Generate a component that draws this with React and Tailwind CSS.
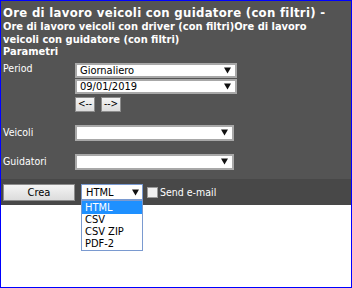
import React from "react";

const Arrow = () => (
  <svg width="7" height="7" viewBox="0 0 7 7" className="shrink-0">
    <path d="M0 0.5 H7 L3.5 6.5 Z" fill="#111" />
  </svg>
);

const Select = ({ value, w, className = "" }) => (
  <div
    className={`h-[15px] bg-white border-2 border-[#a8a8a8] flex items-center justify-between pl-[3px] pr-[4px] text-[11px] leading-none text-black ${w} ${className}`}
  >
    <span>{value}</span>
    <Arrow />
  </div>
);

const Btn = ({ children, className = "" }) => (
  <div
    className={`h-[15px] bg-gradient-to-b from-[#f4f4f4] to-[#dcdcdc] border border-[#8c8c8c] flex items-center justify-center text-[10px] leading-none text-black ${className}`}
  >
    {children}
  </div>
);

export default function App() {
  return (
    <div
      className="w-[352px] h-[288px] border border-[#0000ff] bg-white flex flex-col relative"
      style={{ fontFamily: '"DejaVu Sans Condensed", "DejaVu Sans", sans-serif' }}
    >
      <div className="bg-[#545454] text-white pl-[2px] pt-[4px] h-[178px]">
        <div className="text-[13px] font-bold leading-[15px] tracking-[0.3px]">
          Ore di lavoro veicoli con guidatore (con filtri) -
        </div>
        <div className="text-[11px] font-bold leading-[12.5px] mt-[1px]">
          Ore di lavoro veicoli con driver (con filtri)Ore di lavoro
          <br />
          veicoli con guidatore (con filtri)
        </div>
        <div className="text-[11px] font-bold leading-[12.5px]">Parametri</div>
        <div className="flex mt-[3px]">
          <div className="w-[72px] text-[10.5px] leading-[13px]">Period</div>
          <div className="flex flex-col gap-[1px] mt-[1px]">
            <Select value="Giornaliero" w="w-[162px]" />
            <Select value="09/01/2019" w="w-[162px]" />
            <div className="flex gap-[6px] mt-[2px]">
              <Btn className="w-[20px]">&lt;--</Btn>
              <Btn className="w-[20px]">--&gt;</Btn>
            </div>
          </div>
        </div>
        <div className="flex mt-[13px]">
          <div className="w-[72px] text-[10.5px] leading-[13px] pt-[1px]">Veicoli</div>
          <Select value="" w="w-[159px]" className="h-[16px]" />
        </div>
        <div className="flex mt-[13px]">
          <div className="w-[72px] text-[10.5px] leading-[13px] pt-[1px]">Guidatori</div>
          <Select value="" w="w-[159px]" className="h-[16px]" />
        </div>
      </div>
      <div className="bg-[#484848] h-[26px] flex items-center pl-[2px] gap-[6px]">
        <Btn className="w-[72px] h-[17px] text-[11px]">Crea</Btn>
        <div className="w-[62px] h-[16px] bg-white border border-[#7a9ad0] flex items-center justify-between pl-[4px] pr-[3px] text-[11px] leading-none text-black">
          <span>HTML</span>
          <Arrow />
        </div>
        <div className="flex items-center gap-[2px] -ml-[2px]">
          <div className="w-[11px] h-[11px] bg-[#f0f0f0] border border-[#9a9a9a]" />
          <span className="text-[10.5px] text-white leading-none">Send e-mail</span>
        </div>
      </div>
      <div className="absolute left-[80px] top-[199px] w-[62px] bg-white border border-[#7a9ad0] text-[11px] leading-[12px] text-black">
        <div className="bg-[#1e90ff] text-white pl-[3px] h-[13px] flex items-center">HTML</div>
        <div className="pl-[3px] h-[12px] flex items-center">CSV</div>
        <div className="pl-[3px] h-[12px] flex items-center">CSV ZIP</div>
        <div className="pl-[3px] h-[12px] flex items-center">PDF-2</div>
      </div>
    </div>
  );
}
